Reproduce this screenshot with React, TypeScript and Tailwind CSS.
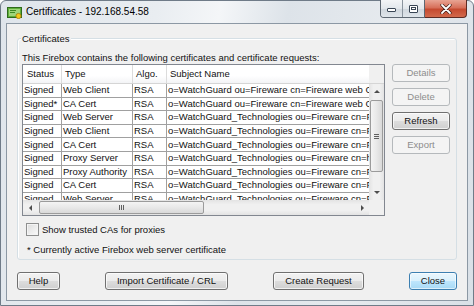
import React from "react";

const rows: string[][] = [
  ["Signed", "Web Client", "RSA", "o=WatchGuard ou=Fireware cn=Fireware web CA"],
  ["Signed*", "CA Cert", "RSA", "o=WatchGuard ou=Fireware cn=Fireware web CA"],
  ["Signed", "Web Server", "RSA", "o=WatchGuard_Technologies ou=Fireware cn=Fireware"],
  ["Signed", "Web Client", "RSA", "o=WatchGuard_Technologies ou=Fireware cn=Fireware"],
  ["Signed", "CA Cert", "RSA", "o=WatchGuard_Technologies ou=Fireware cn=Fireware"],
  ["Signed", "Proxy Server", "RSA", "o=WatchGuard_Technologies ou=Fireware cn=https"],
  ["Signed", "Proxy Authority", "RSA", "o=WatchGuard_Technologies ou=Fireware cn=Fireware"],
  ["Signed", "CA Cert", "RSA", "o=WatchGuard_Technologies ou=Fireware cn=Fireware"],
  ["Signed", "Web Server", "RSA", "o=WatchGuard_Technologies ou=Fireware cn=Fireware"],
];

function Btn({
  label,
  w,
  disabled,
  primary,
}: {
  label: string;
  w: string;
  disabled?: boolean;
  primary?: boolean;
}) {
  const base =
    "h-[18px] rounded-[3px] border flex items-center justify-center text-[9.5px] leading-none shrink-0 ";
  let cls = "";
  if (disabled) {
    cls = "border-[#b5b9bc] bg-[#f4f4f4] text-[#8d8d8d]";
  } else if (primary) {
    cls =
      "border-[#3c7fb1] text-[#111] bg-[linear-gradient(to_bottom,#eaf6fd_0%,#d9f0fc_50%,#bee6fd_51%,#a7d9f5_100%)] shadow-[inset_0_0_0_1px_rgba(255,255,255,0.6)]";
  } else {
    cls =
      "border-[#707070] text-[#111] bg-[linear-gradient(to_bottom,#f2f2f2_0%,#ebebeb_50%,#dddddd_51%,#cfcfcf_100%)] shadow-[inset_0_0_0_1px_rgba(255,255,255,0.7)]";
  }
  return <div className={base + w + " " + cls}>{label}</div>;
}

function Arrow({ dir }: { dir: "up" | "down" | "left" | "right" }) {
  const pts: Record<string, string> = {
    up: "1,5 4,2 7,5",
    down: "1,2 4,5 7,2",
    left: "5,1 2,4 5,7",
    right: "3,1 6,4 3,7",
  };
  return (
    <svg width="8" height="8" viewBox="0 0 8 8">
      <polygon points={pts[dir]} fill="#4d4d4d" />
    </svg>
  );
}

export default function App() {
  return (
    <div className="w-[474px] h-[306px] overflow-hidden font-['Liberation_Sans',Arial,sans-serif] text-[#111]">
      <div className="w-[474px] h-[306px] flex flex-col border border-[#6f7b88] rounded-t-[6px] bg-[linear-gradient(100deg,#dfe5eb_0%,#e9edf1_30%,#f4f6f8_42%,#dde3e9_55%,#e6eaee_75%,#d9e0e7_100%)]">
        {/* title bar */}
        <div className="h-[22px] flex items-start relative shrink-0">
          <div className="mt-[6px] ml-[6px] w-[15px] h-[12px]">
            <svg width="15" height="12" viewBox="0 0 15 12">
              <rect x="0.5" y="0.5" width="14" height="10" fill="#5fae3a" stroke="#2f6b1c" />
              <rect x="2" y="2" width="11" height="7" fill="#9fd67a" />
              <rect x="3" y="3" width="6" height="1" fill="#3f8a25" />
              <rect x="3" y="5" width="5" height="1" fill="#3f8a25" />
              <circle cx="11.5" cy="9" r="2.6" fill="#f2c919" stroke="#a07a06" strokeWidth="0.8" />
            </svg>
          </div>
          <div className="ml-[4px] mt-[4px] text-[10px] leading-[14px] text-black">
            Certificates - 192.168.54.58
          </div>
          {/* window controls */}
          <div className="absolute top-[-1px] right-[6px] flex">
            <div className="flex h-[18px] border border-t-0 border-[#5d6772] rounded-bl-[4px] overflow-hidden">
              <div className="w-[22px] h-full flex items-center justify-center bg-[linear-gradient(to_bottom,#f3f5f7_0%,#e2e7ec_50%,#cfd6dd_51%,#dfe5ea_100%)] border-r border-[#8a949e]">
                <div className="w-[9px] h-[4px] mt-[3px] border border-[#394655] bg-white rounded-[1px]" />
              </div>
              <div className="w-[21px] h-full flex items-center justify-center bg-[linear-gradient(to_bottom,#f3f5f7_0%,#e2e7ec_50%,#cfd6dd_51%,#dfe5ea_100%)]">
                <div className="w-[9px] h-[8px] border border-[#394655] bg-white flex items-center justify-center rounded-[1px]">
                  <div className="w-[5px] h-[3px] border border-[#394655]" />
                </div>
              </div>
            </div>
            <div className="w-[42px] h-[18px] border border-t-0 border-l-0 border-[#5d2a22] rounded-br-[4px] flex items-center justify-center bg-[linear-gradient(to_bottom,#e8a493_0%,#d7705a_45%,#c54a30_55%,#d2694b_100%)]">
              <svg width="12" height="10" viewBox="0 0 12 10">
                <path d="M2 1 L10 9 M10 1 L2 9" stroke="#3b1a14" strokeWidth="3.2" strokeLinecap="round" />
                <path d="M2 1 L10 9 M10 1 L2 9" stroke="#ffffff" strokeWidth="1.8" strokeLinecap="round" />
              </svg>
            </div>
          </div>
        </div>

        {/* client area */}
        <div className="mx-[5px] flex-1 mb-[4px] border border-[#8c98a4] bg-[#f0f0f0] flex flex-col">
          {/* group box */}
          <div className="ml-[10px] mt-[14px] w-[440px] h-[222px] border border-[#d5dfe5] rounded-[3px] relative shadow-[inset_1px_1px_0_#ffffff] flex flex-col pl-[4px] pt-[12px]">
            <div className="absolute top-[-7px] left-[3px] px-[1px] bg-[#f0f0f0] text-[9.5px] leading-[13px]">
              Certificates
            </div>
            <div className="h-[13px] text-[9.5px] leading-[13px]">
              This Firebox contains the following certificates and certificate requests:
            </div>
            <div className="flex gap-[7px]">
              {/* table */}
              <div className="w-[363px] h-[152px] border border-[#828790] bg-white flex flex-col text-[9.5px]">
                <div className="flex flex-1 min-h-0">
                  <div className="w-[346px] flex flex-col overflow-hidden">
                    <div className="h-[19px] flex shrink-0 border-b border-[#d5d5d5] bg-[linear-gradient(to_bottom,#ffffff_0%,#ffffff_60%,#f3f4f6_100%)]">
                      <div className="w-[39px] shrink-0 border-r border-[#dcdcdc] pl-[4px] flex items-center">Status</div>
                      <div className="w-[71px] shrink-0 border-r border-[#dcdcdc] pl-[3px] flex items-center">Type</div>
                      <div className="w-[34px] shrink-0 border-r border-[#dcdcdc] pl-[3px] flex items-center">Algo.</div>
                      <div className="w-[260px] shrink-0 pl-[3px] flex items-center whitespace-nowrap">Subject Name</div>
                    </div>
                    {rows.map((r, i) => (
                      <div key={i} className="h-[13.6px] shrink-0 flex border-b border-[#a0a0a0] leading-[12px]">
                        <div className="w-[39px] shrink-0 border-r border-[#a0a0a0] pl-[1px] flex items-center whitespace-nowrap">{r[0]}</div>
                        <div className="w-[71px] shrink-0 border-r border-[#a0a0a0] pl-[1px] flex items-center whitespace-nowrap">{r[1]}</div>
                        <div className="w-[34px] shrink-0 border-r border-[#a0a0a0] pl-[1px] flex items-center whitespace-nowrap">{r[2]}</div>
                        <div className="w-[260px] shrink-0 pl-[1px] flex items-center whitespace-nowrap overflow-hidden">{r[3]}</div>
                      </div>
                    ))}
                  </div>
                  {/* vertical scrollbar */}
                  <div className="w-[15px] flex flex-col shrink-0">
                    <div className="h-[19px] shrink-0 bg-[#f0f0f0] border-b border-[#d5d5d5]" />
                    <div className="flex-1 flex flex-col items-center bg-[linear-gradient(to_right,#e3e3e3,#f0f0f0_30%,#f0f0f0_70%,#e3e3e3)]">
                      <div className="h-[15px] flex items-center justify-center"><Arrow dir="up" /></div>
                      <div className="mt-[1px] w-[13px] h-[72px] rounded-[2px] border border-[#9b9b9b] bg-[linear-gradient(to_right,#f4f4f4,#e8e8e8_50%,#d9d9d9)] flex flex-col items-center justify-center gap-[1px]">
                        <div className="w-[5px] h-[1px] bg-[#606060]" />
                        <div className="w-[5px] h-[1px] bg-[#606060]" />
                        <div className="w-[5px] h-[1px] bg-[#606060]" />
                      </div>
                      <div className="flex-1" />
                      <div className="h-[15px] flex items-center justify-center"><Arrow dir="down" /></div>
                    </div>
                  </div>
                </div>
                {/* horizontal scrollbar */}
                <div className="h-[15px] flex shrink-0">
                  <div className="w-[346px] flex items-center bg-[linear-gradient(to_bottom,#e3e3e3,#f0f0f0_30%,#f0f0f0_70%,#e3e3e3)]">
                    <div className="w-[15px] h-full flex items-center justify-center"><Arrow dir="left" /></div>
                    <div className="ml-[1px] w-[165px] h-[13px] rounded-[2px] border border-[#9b9b9b] bg-[linear-gradient(to_bottom,#f4f4f4,#e8e8e8_50%,#d9d9d9)] flex items-center justify-center gap-[1px]">
                      <div className="w-[1px] h-[5px] bg-[#606060]" />
                      <div className="w-[1px] h-[5px] bg-[#606060]" />
                      <div className="w-[1px] h-[5px] bg-[#606060]" />
                    </div>
                    <div className="flex-1" />
                    <div className="w-[15px] h-full flex items-center justify-center"><Arrow dir="right" /></div>
                  </div>
                  <div className="w-[15px] bg-[#f0f0f0]" />
                </div>
              </div>
              {/* side buttons */}
              <div className="flex flex-col gap-[6px]">
                <Btn label="Details" w="w-[58px]" disabled />
                <Btn label="Delete" w="w-[58px]" disabled />
                <Btn label="Refresh" w="w-[58px]" />
                <Btn label="Export" w="w-[58px]" disabled />
              </div>
            </div>
            <div className="mt-[7px] h-[13px] flex items-center">
              <div className="ml-[4px] w-[13px] h-[13px] border border-[#8e8f8f] bg-[linear-gradient(135deg,#dcdcdc,#fbfbfb)] shadow-[inset_0_0_0_1px_#f4f4f4]" />
              <div className="ml-[3px] text-[9.5px] leading-[13px]">Show trusted CAs for proxies</div>
            </div>
            <div className="mt-[7px] ml-[5px] h-[13px] text-[9.5px] leading-[13px]">
              * Currently active Firebox web server certificate
            </div>
          </div>
          {/* bottom buttons */}
          <div className="ml-[10px] mt-[12px] w-[440px] flex justify-between">
            <Btn label="Help" w="w-[43px]" />
            <Btn label="Import Certificate / CRL" w="w-[123px]" />
            <Btn label="Create Request" w="w-[91px]" />
            <Btn label="Close" w="w-[48px]" primary />
          </div>
        </div>
      </div>
    </div>
  );
}
